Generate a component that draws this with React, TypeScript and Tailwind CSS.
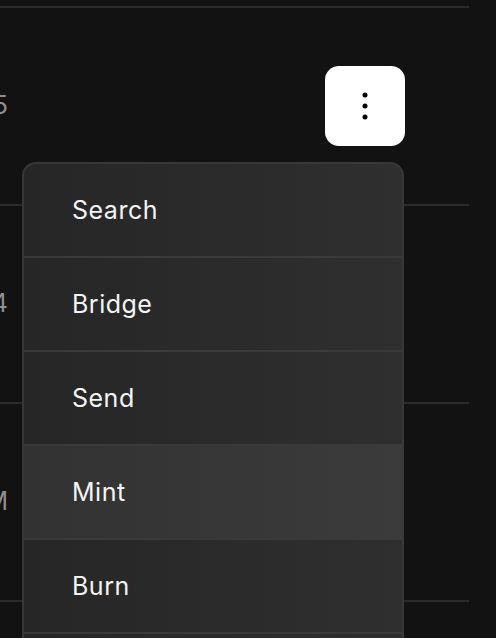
import React from "react";

const rows = ["1.35", "0.25", "2.44", "1.1M", "0.90"];
const items = ["Search", "Bridge", "Send", "Mint", "Burn", "Swap"];

export default function App() {
  return (
    <div
      className="relative h-[638px] w-[496px] overflow-hidden bg-[#121212]"
      style={{ fontFamily: "Inter, 'Noto Sans', sans-serif" }}
    >
      <div className="mt-[-190px] w-[469px]">
        {rows.map((v, i) => (
          <div
            key={i}
            className="flex h-[198px] items-center justify-between border-b-2 border-[#2b2b2b] pr-[64px]"
          >
            <div className="ml-[-92px] w-[100px] text-right text-[25px] text-[#8f8f8f]">{v}</div>
            {i === 1 && (
              <button className="flex h-[80px] w-[80px] items-center justify-center rounded-[14px] bg-white">
                <svg width="6" height="28" viewBox="0 0 6 28">
                  <circle cx="3" cy="3" r="2.5" fill="#000" />
                  <circle cx="3" cy="14" r="2.5" fill="#000" />
                  <circle cx="3" cy="25" r="2.5" fill="#000" />
                </svg>
              </button>
            )}
          </div>
        ))}
      </div>

      {/* dropdown menu */}
      <div className="absolute left-[22px] top-[162px] w-[382px] overflow-hidden rounded-t-[14px] border-2 border-[#383838] bg-gradient-to-r from-[#262626] to-[#2f2f2f]">
        {items.map((label) => (
          <div
            key={label}
            className={
              "flex h-[94px] items-center border-b-2 border-[#3a3a3a] pl-[48px] pt-[2px] text-[25px] font-normal tracking-[0.02em] text-[#f4f4f4] " +
              (label === "Mint" ? "bg-gradient-to-r from-[#323232] to-[#3b3b3b]" : "")
            }
          >
            {label}
          </div>
        ))}
      </div>
    </div>
  );
}
